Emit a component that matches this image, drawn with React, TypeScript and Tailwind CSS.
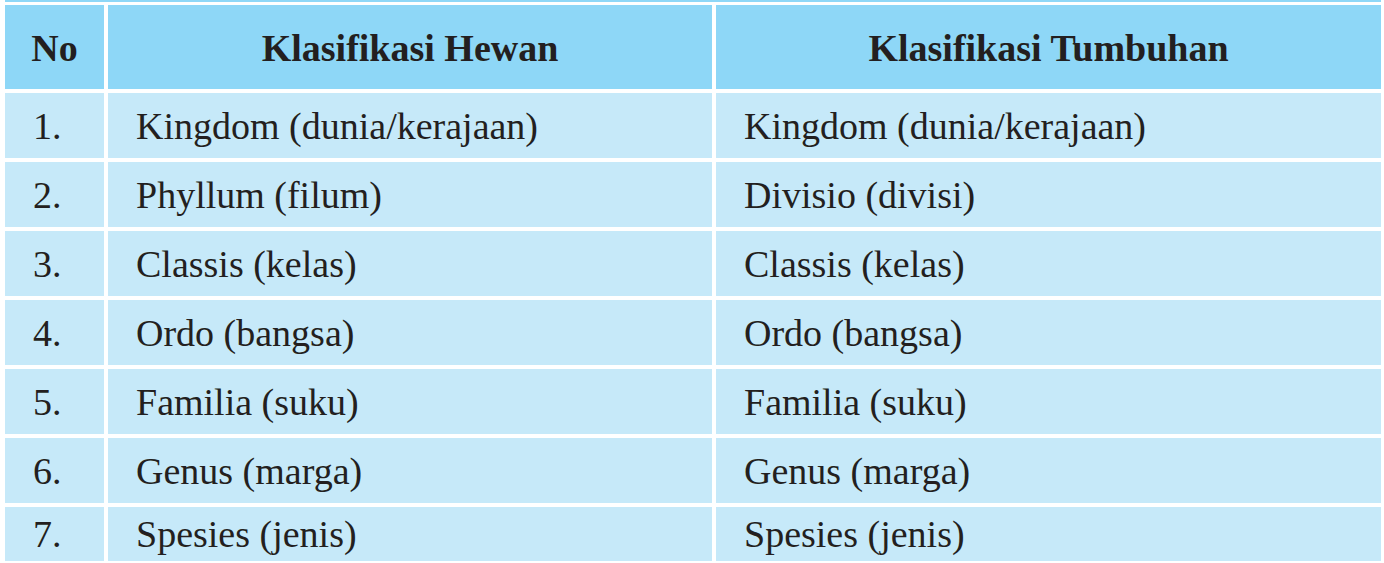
const rows = [
  ["1.", "Kingdom (dunia/kerajaan)", "Kingdom (dunia/kerajaan)"],
  ["2.", "Phyllum (filum)", "Divisio (divisi)"],
  ["3.", "Classis (kelas)", "Classis (kelas)"],
  ["4.", "Ordo (bangsa)", "Ordo (bangsa)"],
  ["5.", "Familia (suku)", "Familia (suku)"],
  ["6.", "Genus (marga)", "Genus (marga)"],
  ["7.", "Spesies (jenis)", "Spesies (jenis)"],
];

export default function App() {
  return (
    <div className="w-[1384px] h-[563px] overflow-hidden bg-white text-[#231f20] font-[family-name:'Liberation_Serif','Times_New_Roman',serif]">
      <div className="ml-[5px] mr-[3px] h-[2px] bg-[#8ed7f7]" />
      <div className="mt-[3px] ml-[5px] grid grid-cols-[99px_604px_665px] grid-rows-[84px_repeat(6,65px)_54px] gap-x-[4px] gap-y-[4px]">
        <div className="bg-[#8ed7f7] flex items-center justify-center pt-[2px] text-[38px] font-bold">No</div>
        <div className="bg-[#8ed7f7] flex items-center justify-center pt-[2px] text-[38px] font-bold">Klasifikasi Hewan</div>
        <div className="bg-[#8ed7f7] flex items-center justify-center pt-[2px] text-[38px] font-bold">Klasifikasi Tumbuhan</div>
        {rows.map(([no, hewan, tumbuhan]) => (
          <div key={no} className="contents">
            <div className="bg-[#c6e9f9] flex items-center pl-[28px] pt-[1px] text-[38px]">{no}</div>
            <div className="bg-[#c6e9f9] flex items-center pl-[28px] pt-[1px] text-[38px]">{hewan}</div>
            <div className="bg-[#c6e9f9] flex items-center pl-[28px] pt-[1px] text-[38px]">{tumbuhan}</div>
          </div>
        ))}
      </div>
    </div>
  );
}
